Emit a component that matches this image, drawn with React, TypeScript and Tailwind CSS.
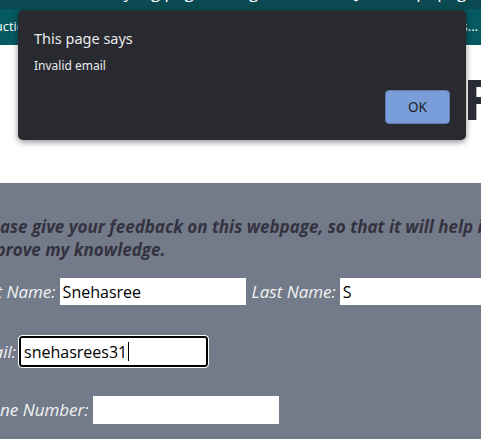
import React from "react";

export default function App() {
  return (
    <div className="relative w-[481px] h-[439px] overflow-hidden bg-white" style={{ fontFamily: '"Open Sans", sans-serif' }}>
      {/* top bars */}
      <div className="h-[9px] bg-[#0b4a52] overflow-hidden">
        <div className="text-white text-[17px] leading-[17px] -mt-[17px] pl-[108px] whitespace-nowrap">Styling pages using CSS, HTML, JavaScript pages</div>
      </div>
      <div className="h-[36px] bg-[#055960] flex items-center justify-between text-white text-[13px] whitespace-nowrap overflow-hidden">
        <span className="-ml-[33px] shrink-0">Instruction</span>
        <span className="mr-[3px] shrink-0">Contacts...</span>
      </div>
      {/* white header area */}
      <div className="h-[138px] pt-[25px] overflow-hidden">
        <h1 className="pl-[463px] whitespace-nowrap text-[56px] font-bold text-[#2a2c37] leading-none">Feedback Form</h1>
      </div>
      {/* gray section */}
      <div className="bg-[#737b8a] h-[256px] pt-[32px]">
        <p className="-ml-[25px] whitespace-nowrap text-[17px] leading-[23px] font-bold italic text-[#35323f]">
          Please give your feedback on this webpage, so that it will help in
          <br />
          improve my knowledge.
        </p>
        <div className="mt-[17px] -ml-[30px] flex items-center whitespace-nowrap">
          <span className="shrink-0 italic text-[17px] text-[#f2f2f2] mr-[4px]">First Name:</span>
          <div className="shrink-0 w-[186px] h-[27px] bg-white flex items-center px-[3px] text-[16px] text-black">Snehasree</div>
          <span className="shrink-0 italic text-[17px] text-[#f2f2f2] ml-[6px] mr-[4px]">Last Name:</span>
          <div className="shrink-0 w-[186px] h-[27px] bg-white flex items-center px-[3px] text-[16px] text-black">S</div>
        </div>
        <div className="mt-[31px] -ml-[30px] flex items-center whitespace-nowrap">
          <span className="shrink-0 italic text-[17px] text-[#f2f2f2] mr-[3px]">Email:</span>
          <div className="shrink-0 w-[189px] h-[31px] bg-white border-2 border-black rounded-[3px] outline outline-1 outline-white flex items-center px-[3px] text-[16px] text-black">
            snehasrees31<span className="inline-block w-[1px] h-[19px] bg-black ml-[1px]"></span>
          </div>
        </div>
        <div className="mt-[29px] -ml-[29px] flex items-center whitespace-nowrap">
          <span className="shrink-0 italic text-[17px] text-[#f2f2f2] mr-[4px]">Phone Number:</span>
          <div className="shrink-0 w-[186px] h-[28px] bg-white"></div>
        </div>
      </div>

      {/* alert dialog */}
      <div
        className="absolute left-[18px] top-[10px] w-[448px] h-[130px] bg-[#292a2f] rounded-[5px] shadow-[0_2px_6px_rgba(0,0,0,0.45)] pl-[16px] pr-[16px] pt-[18px]"
        style={{ fontFamily: '"Noto Sans", "Open Sans", sans-serif' }}
      >
        <div className="text-[14.5px] leading-[20px] text-[#e8eaed]">This page says</div>
        <div className="mt-[10px] text-[12px] leading-[16px] text-[#e8eaed]">Invalid email</div>
        <div className="flex justify-end mt-[16px]">
          <button className="w-[65px] h-[34px] rounded-[4px] bg-[#7a9ed9] border border-[#5d7bb0] text-[13.5px] text-[#1d1f24]">OK</button>
        </div>
      </div>
    </div>
  );
}
